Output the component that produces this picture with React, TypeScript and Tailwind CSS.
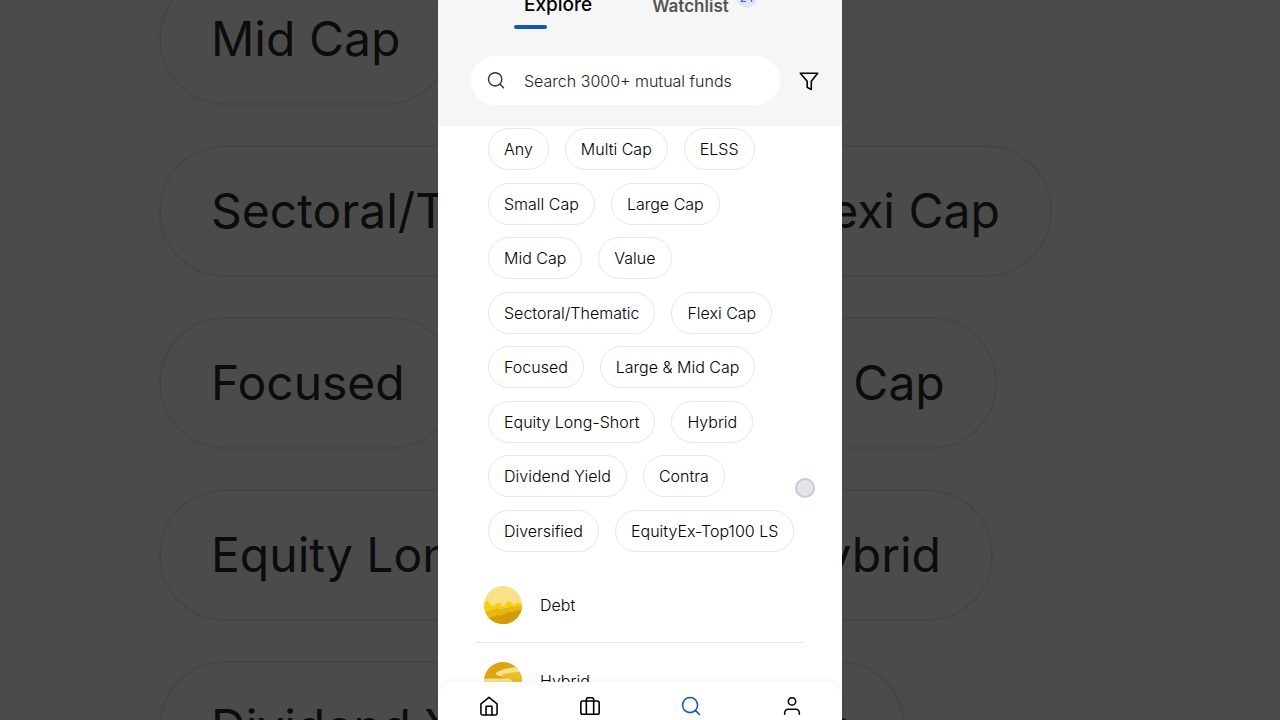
import { ReactNode } from "react";

const rows = [
  ["Any", "Multi Cap", "ELSS"],
  ["Small Cap", "Large Cap"],
  ["Mid Cap", "Value"],
  ["Sectoral/Thematic", "Flexi Cap"],
  ["Focused", "Large & Mid Cap"],
  ["Equity Long-Short", "Hybrid"],
  ["Dividend Yield", "Contra"],
  ["Diversified", "EquityEx-Top100 LS"],
];

interface IconProps {
  children: ReactNode;
  className?: string;
}

function Icon({ children, className = "size-6" }: IconProps) {
  return (
    <svg
      viewBox="0 0 24 24"
      fill="none"
      stroke="currentColor"
      strokeWidth="1.7"
      strokeLinecap="round"
      strokeLinejoin="round"
      className={className}
      aria-hidden="true"
    >
      {children}
    </svg>
  );
}

/* Enlarged, dimmed copy of the list behind the phone column */
function Backdrop() {
  return (
    <div aria-hidden="true" className="absolute inset-0 overflow-hidden bg-[#4b4b4b]">
      <div className="-mt-[27px] ml-[159px] flex flex-col gap-10">
        {rows.slice(2, 7).map((row) => (
          <div key={row[0]} className="flex gap-[60px]">
            {row.map((label) => (
              <span
                key={label}
                className="flex h-[132px] shrink-0 items-center rounded-full border-2 border-[#464646] px-[50px] text-5xl whitespace-nowrap text-[#0c0c0c]"
              >
                {label}
              </span>
            ))}
          </div>
        ))}
      </div>
    </div>
  );
}

function DebtArt() {
  return (
    <svg viewBox="0 0 38 38" className="size-[38px] shrink-0" aria-hidden="true">
      <clipPath id="debt">
        <circle cx="19" cy="19" r="19" />
      </clipPath>
      <g clipPath="url(#debt)">
        <path fill="#fbe08a" d="M0 0h38v38H0z" />
        <path
          fill="#f5d010"
          d="M0 18q2-4 4-3 2 3 4 5 3 0 5-3 2-1 4 1 2 3 3 2 2-4 5-5 3 1 4 4 3 0 4-2 3-1 5 1v21H0z"
        />
        <path
          fill="#e8b615"
          d="M0 26q5 0 8-3 4 1 6-1 2 3 5 1 2-2 5-1 2-3 6-1 3-2 8 0v17H0z"
        />
        <path fill="#d49b08" d="M2 32q7 0 11-3 3 2 6-1 3 1 5-2 4 1 7-1 3 0 7-2v15H6z" />
      </g>
    </svg>
  );
}

function HybridArt() {
  return (
    <svg viewBox="0 0 38 38" className="size-[38px] shrink-0" aria-hidden="true">
      <clipPath id="hybrid">
        <circle cx="19" cy="19" r="19" />
      </clipPath>
      <g clipPath="url(#hybrid)">
        <path fill="#dba514" d="M0 0h38v38H0z" />
        <path fill="#fbe08a" d="M38 5c-10 0-22 2-26 6-1 4 8 3 12 5-8 1-16 0-24 1v21h38z" />
        <path fill="#e9bd2c" d="M38 10c-8 0-16 1-20 3 2 3 9 3 10 6-2 3-8 2-14 3v16h24z" />
      </g>
    </svg>
  );
}

const funds = [
  { name: "Debt", art: <DebtArt /> },
  { name: "Hybrid", art: <HybridArt /> },
];

const navItems = [
  {
    name: "Home",
    icon: (
      <>
        <path d="M3.200 9.600 12 2.500l8.800 7.100V20a1.800 1.800 0 0 1-1.800 1.800H5A1.800 1.800 0 0 1 3.200 20z" />
        <path d="M8.800 21.500v-9.300h6.400v9.300" />
      </>
    ),
  },
  {
    name: "Portfolio",
    icon: (
      <>
        <rect x="2" y="6.500" width="20" height="14.500" rx="2" />
        <path d="M8 21V4.800A1.800 1.800 0 0 1 9.800 3h4.400A1.800 1.800 0 0 1 16 4.800V21" />
      </>
    ),
  },
  {
    name: "Search",
    active: true,
    icon: (
      <>
        <circle cx="11" cy="11" r="8.200" />
        <path d="m17 17 4.300 4.300" />
      </>
    ),
  },
  {
    name: "Account",
    icon: (
      <>
        <circle cx="12" cy="7" r="4" />
        <path d="M4 21v-1.500a4 4 0 0 1 4-4h8a4 4 0 0 1 4 4V21" />
      </>
    ),
  },
];

export default function App() {
  return (
    <div className="relative h-screen overflow-hidden font-['Inter',sans-serif]">
      <Backdrop />

      <div className="relative mx-auto flex h-full w-full max-w-[404px] flex-col bg-white text-black">
        {/* Tabs and search */}
        <header className="h-[126px] shrink-0 bg-[#f6f6f6]">
          <div className="flex h-[29px] items-end gap-[60px] pl-[76px]">
            <button className="flex flex-col gap-2 text-[19px] leading-6 font-medium text-black">
              <span className="pl-[10px]">Explore</span>
              <span className="h-1 w-[33px] rounded-full bg-[#1556b0]" />
            </button>
            <button className="flex gap-2 pb-[11px] text-[17px] leading-6 font-semibold text-[#555]">
              Watchlist
              <span className="-mt-[6px] flex size-5 items-center justify-center rounded-full bg-[#dfe6f8] text-[11px] font-medium text-[#3b63c4]">
                24
              </span>
            </button>
          </div>

          <div className="mt-[27px] flex items-center gap-[18px] pr-[22px] pl-[33px]">
            <label className="flex h-[49px] min-w-0 flex-1 items-center gap-[18px] rounded-full bg-white pl-[15px]">
              <Icon className="size-5 shrink-0 text-[#333]">
                <circle cx="11" cy="10" r="8" />
                <path d="m17 16 4 4" />
              </Icon>
              <input
                type="text"
                aria-label="Search mutual funds"
                placeholder="Search 3000+ mutual funds"
                className="w-full min-w-0 bg-transparent text-base font-light outline-none placeholder:text-[#222]"
              />
            </label>
            <button aria-label="Filter" className="text-black">
              <Icon className="size-[22px]">
                <path d="M2.500 3.500h19l-7 8.800v9l-4.500-2.300v-6.700z" />
              </Icon>
            </button>
          </div>
        </header>

        {/* Categories */}
        <main className="min-h-0 flex-1 overflow-hidden pt-[2px]">
          <div className="flex h-[424px] flex-col justify-between pl-[50px]">
            {rows.map((row) => (
              <div key={row[0]} className="flex gap-4">
                {row.map((label) => (
                  <button
                    key={label}
                    className="h-[42px] rounded-full border border-[#e8e8e8] px-[15px] text-base font-light whitespace-nowrap"
                  >
                    {label}
                  </button>
                ))}
              </div>
            ))}
          </div>

          <ul className="mt-[15px] divide-y divide-[#e6e6e6] pr-[38px] pl-[37px]">
            {funds.map((fund) => (
              <li key={fund.name} className="flex h-[76px] items-center gap-[18px] pl-[9px]">
                {fund.art}
                <span className="text-base font-light">{fund.name}</span>
              </li>
            ))}
          </ul>
        </main>

        {/* Touch indicator */}
        <span className="absolute top-[478px] right-[27px] size-5 rounded-full border-2 border-[#c3cbdc] bg-[#e3e4e6]" />

        <nav className="absolute inset-x-0 bottom-0 flex h-[38px] items-start rounded-t-2xl bg-white pt-[13px] shadow-[0_-2px_6px_rgba(0,0,0,0.04)]">
          {navItems.map((item) => (
            <a
              key={item.name}
              href="#"
              aria-label={item.name}
              className={
                item.active
                  ? "flex flex-1 justify-center text-[#1556b0]"
                  : "flex flex-1 justify-center text-black"
              }
            >
              <Icon className="size-[22px]">{item.icon}</Icon>
            </a>
          ))}
        </nav>
      </div>
    </div>
  );
}
